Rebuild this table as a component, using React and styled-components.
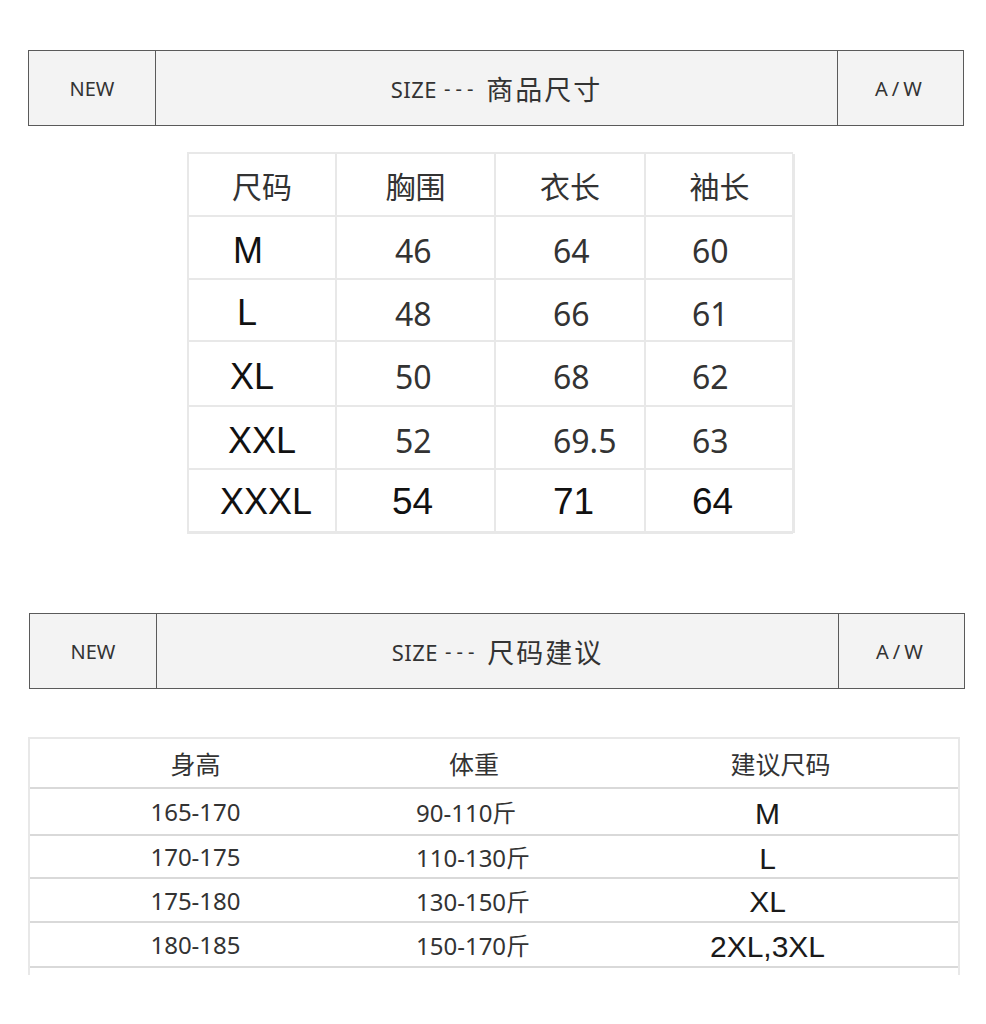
import React from 'react';
import styled, { createGlobalStyle } from 'styled-components';

// Color configurations
const colors = {
  white: '#FFFFFF',
  barBg: '#F3F3F3',
  barLine: '#5A5A5A',
  text: '#333333',
  ink: '#111111',
  gridLine: '#E8E8E8',
  rowLine: '#D9D9D9',
};

// Font configurations
const fonts = {
  body: `'Noto Sans', 'Noto Sans CJK SC', sans-serif`,
  arial: `'Liberation Sans', 'Noto Sans CJK SC', sans-serif`,
};

const GlobalStyle = createGlobalStyle`
  body {
    margin: 0;
    background: ${colors.white};
    font-family: ${fonts.body};
    color: ${colors.text};
  }
`;

const Page = styled.div`
  width: 986px;
  height: 1024px;
  padding-top: 50px;
  box-sizing: border-box;
  display: flex;
  flex-direction: column;
`;

/* Title bar: NEW | SIZE --- ... | A/W */
const TitleBar = styled.div`
  margin-left: ${(p) => p.left}px;
  margin-top: ${(p) => p.top || 0}px;
  width: 936px;
  height: 76px;
  box-sizing: border-box;
  border: 1px solid ${colors.barLine};
  background: ${colors.barBg};
  display: grid;
  grid-template-columns: 126px 1fr 126px;
`;

const BarCell = styled.div`
  display: flex;
  align-items: center;
  justify-content: center;
  font-size: 20px;
  color: ${colors.text};
  letter-spacing: ${(p) => p.spacing || 0}px;
  border-left: ${(p) => (p.divider ? `1px solid ${colors.barLine}` : 'none')};
  padding-top: 1px;
`;

const BarTitle = styled.span`
  font-size: 22px;
  letter-spacing: 0.5px;
`;

const BarCjk = styled.span`
  font-size: 27px;
  letter-spacing: 2px;
  margin-left: 8px;
`;

const Dashes = styled.span`
  letter-spacing: 5px;
  margin-left: 7px;
`;

/* Measurement table */
const MeasureTable = styled.div`
  margin-top: 26px;
  margin-left: 187px;
  width: 606px;
  display: grid;
  grid-template-columns: 148px 159px 150px 149px;
  border: 2px solid ${colors.gridLine};
  border-right-width: 1px;
  border-bottom-width: 1px;
  box-sizing: border-box;
`;

const MCell = styled.div`
  height: ${(p) => p.h}px;
  box-sizing: border-box;
  border-right: 2px solid ${colors.gridLine};
  border-bottom: 2px solid ${colors.gridLine};
  display: flex;
  align-items: center;
  justify-content: ${(p) => (p.head ? 'center' : 'flex-start')};
  padding-left: ${(p) => (p.head ? 0 : p.pad)}px;
  padding-top: ${(p) => p.shift || 0}px;
  font-family: ${(p) => (p.arial ? fonts.arial : fonts.body)};
  font-size: ${(p) => p.size}px;
  color: ${(p) => (p.arial ? colors.ink : colors.text)};
`;

/* Recommendation table */
const AdviceTable = styled.div`
  margin-top: 48px;
  margin-left: 28px;
  width: 932px;
  border-left: 2px solid ${colors.gridLine};
  border-right: 2px solid ${colors.gridLine};
  border-top: 2px solid ${colors.gridLine};
  padding-bottom: 7px;
  box-sizing: border-box;
`;

const AdviceRow = styled.div`
  display: grid;
  grid-template-columns: 331px 226px 1fr;
  height: ${(p) => p.h}px;
  box-sizing: border-box;
  border-bottom: 2px solid ${colors.rowLine};
`;

const ACell = styled.div`
  display: flex;
  align-items: center;
  justify-content: ${(p) => p.align || 'center'};
  padding-left: ${(p) => p.pl || 0}px;
  padding-right: ${(p) => p.pr || 0}px;
  padding-top: ${(p) => p.shift || 0}px;
  font-family: ${(p) => (p.arial ? fonts.arial : fonts.body)};
  font-size: ${(p) => p.size || 24}px;
  color: ${(p) => (p.arial ? '#1a1a1a' : colors.text)};
`;

const measureRows = [
  { size: 'M', vals: ['46', '64', '60'], h: 63, shift: 6 },
  { size: 'L', vals: ['48', '66', '61'], h: 62, shift: 6 },
  { size: 'XL', vals: ['50', '68', '62'], h: 65, shift: 6 },
  { size: 'XXL', vals: ['52', '69.5', '63'], h: 63, shift: 6 },
  { size: 'XXXL', vals: ['54', '71', '64'], h: 63, shift: 2, last: true },
];

const sizePads = { M: 44, L: 48, XL: 41, XXL: 39, XXXL: 31 };
const valuePads = [58, 57, 46];

const adviceRows = [
  { h: '165-170', w: '90-110斤', s: 'M', rh: 47 },
  { h: '170-175', w: '110-130斤', s: 'L', rh: 43 },
  { h: '175-180', w: '130-150斤', s: 'XL', rh: 44 },
  { h: '180-185', w: '150-170斤', s: '2XL,3XL', rh: 45 },
];

const Bar = ({ left, top, cjk }) => (
  <TitleBar left={left} top={top}>
    <BarCell>NEW</BarCell>
    <BarCell divider>
      <BarTitle>SIZE</BarTitle>
      <Dashes>---</Dashes>
      <BarCjk>{cjk}</BarCjk>
    </BarCell>
    <BarCell divider spacing={4}>A/W</BarCell>
  </TitleBar>
);

const App = () => {
  return (
    <Page>
      <GlobalStyle />
      <Bar left={28} cjk="商品尺寸" />

      <MeasureTable>
        {['尺码', '胸围', '衣长', '袖长'].map((t) => (
          <MCell key={t} head h={63} size={30}>
            {t}
          </MCell>
        ))}
        {measureRows.map((row) => (
          <React.Fragment key={row.size}>
            <MCell h={row.h} arial size={36} pad={sizePads[row.size]} shift={row.shift}>
              {row.size}
            </MCell>
            {row.vals.map((v, i) => (
              <MCell
                key={i}
                h={row.h}
                arial={row.last}
                size={row.last ? 37 : 32}
                pad={valuePads[i] - (row.last && i === 0 ? 3 : 0)}
                shift={row.shift}
              >
                {v}
              </MCell>
            ))}
          </React.Fragment>
        ))}
      </MeasureTable>

      <Bar left={29} top={79} cjk="尺码建议" />

      <AdviceTable>
        <AdviceRow h={50}>
          <ACell size={25}>身高</ACell>
          <ACell size={25}>体重</ACell>
          <ACell size={25} pl={16}>建议尺码</ACell>
        </AdviceRow>
        {adviceRows.map((r) => (
          <AdviceRow key={r.h} h={r.rh}>
            <ACell>{r.h}</ACell>
            <ACell align="flex-start" pl={55}>{r.w}</ACell>
            <ACell arial size={30} pr={10} shift={4}>{r.s}</ACell>
          </AdviceRow>
        ))}
      </AdviceTable>
    </Page>
  );
};

export default App;
